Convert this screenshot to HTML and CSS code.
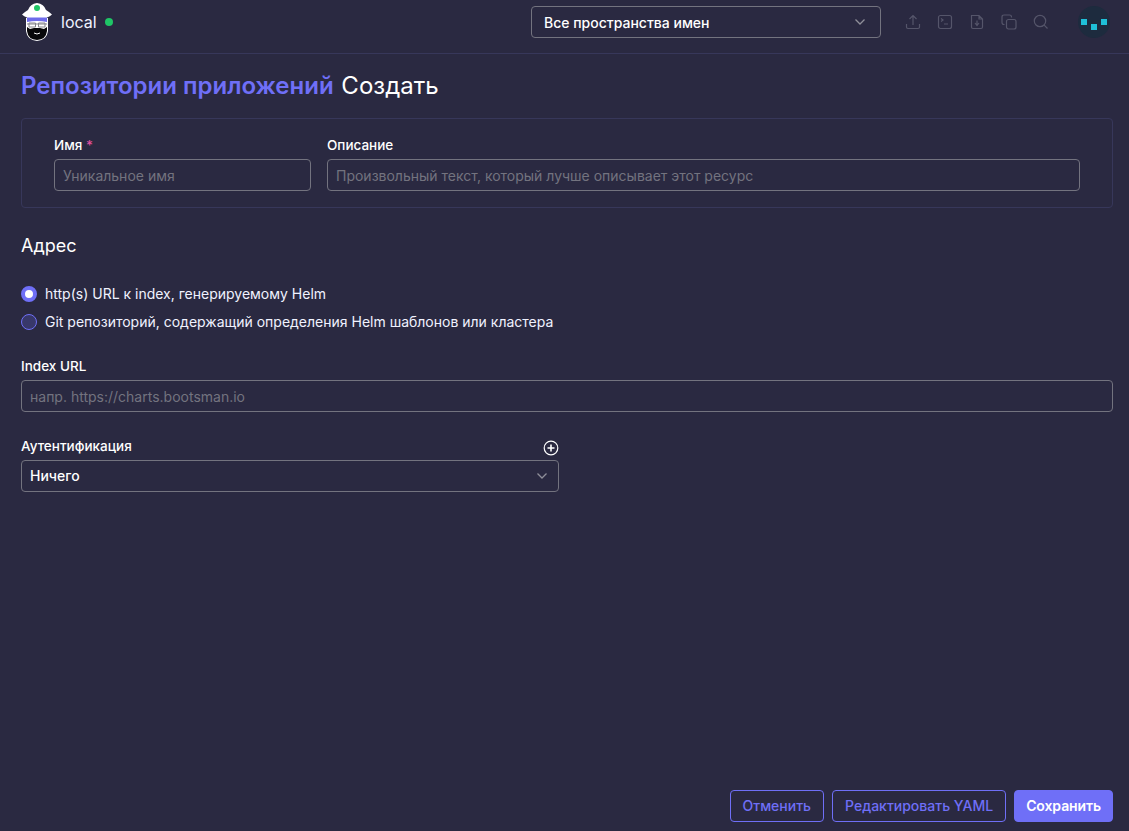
FILE: index.html
```html
<!DOCTYPE html>
<html lang="ru">
<head>
    <meta charset="UTF-8">
    <meta name="viewport" content="width=device-width, initial-scale=1.0">
    <title>Репозитории приложений: Создать</title>
    <link rel="stylesheet" href="styles.css">
</head>
<body>
    <header class="topbar">
        <div class="cluster">
            <svg class="logo" width="32" height="38" viewBox="0 0 32 38">
                <!-- face and beard -->
                <path d="M5 15 V28 Q6 37 16 38 Q26 37 27 28 V15 Z" fill="#fff"/>
                <path d="M6 24 L9 26 L13 25 H19 L23 26 L26 24 V28 Q25 36.5 16 37 Q7 36.5 6 28 Z" fill="#08080a"/>
                <path d="M13 30 Q16 32 19 30" stroke="#fff" stroke-width="1" fill="none"/>
                <!-- glasses -->
                <path d="M6 21 H26 M8 20 h6.5 v4 h-6.5 z M17.5 20 h6.5 v4 h-6.5 z" stroke="#85858c" stroke-width="1" fill="none"/>
                <!-- cap -->
                <path d="M6 14 H26 V19 Q16 17 6 19 Z" fill="#6e6bea"/>
                <path d="M1 11.5 Q4 8.5 7 7 Q9 1 16 0 Q23 1 25 7 Q28 8.5 31 11.5 Q29 13.5 26 14.5 H6 Q3 13.5 1 11.5 Z" fill="#fff"/>
                <circle cx="16" cy="5" r="3" fill="#1fc566"/>
            </svg>
            <span class="cluster-name">local</span>
            <span class="status-dot"></span>
        </div>
        <div class="ns-select">
            <span>Все пространства имен</span>
            <svg class="chevron" width="12" height="8" viewBox="0 0 12 8"><path d="M1.5 1.5 L6 6 L10.5 1.5" fill="none" stroke="#8f8f99" stroke-width="1.3"/></svg>
        </div>
        <div class="actions">
            <svg width="16" height="16" viewBox="0 0 16 16"><path d="M8 11 V2 M4.5 5 L8 1.5 L11.5 5 M1.5 10 V13 Q1.5 14.5 3 14.5 H13 Q14.5 14.5 14.5 13 V10" /></svg>
            <svg width="16" height="16" viewBox="0 0 16 16"><rect x="1.5" y="1.5" width="13" height="13" rx="2"/><path d="M4 4.5 L6 6 L4 7.5 M7 10 H11"/></svg>
            <svg width="16" height="16" viewBox="0 0 16 16"><path d="M2.5 1.5 H10 L13.5 5 V13 Q13.5 14.5 12 14.5 H4 Q2.5 14.5 2.5 13 Z M10 1.5 V5 H13.5 M8 6.5 V11 M6 9 L8 11.5 L10 9"/></svg>
            <svg width="16" height="16" viewBox="0 0 16 16"><rect x="5.5" y="5.5" width="9.5" height="9.5" rx="2"/><path d="M3.5 10.5 H3 Q1 10.5 1 8.5 V3 Q1 1 3 1 H8.5 Q10.5 1 10.5 3 V3.5"/></svg>
            <svg width="16" height="16" viewBox="0 0 16 16"><circle cx="7" cy="7" r="5.7"/><path d="M11.2 11.2 L14.5 14.5"/></svg>
        </div>
        <div class="avatar">
            <svg width="32" height="32" viewBox="0 0 32 32">
                <circle cx="16" cy="16" r="16" fill="#1d2b3e"/>
                <rect x="3" y="13" width="6" height="6" fill="#1fc0d8"/>
                <rect x="13" y="18" width="6" height="6" fill="#1fc0d8"/>
                <rect x="23" y="13" width="6" height="6" fill="#1fc0d8"/>
            </svg>
        </div>
    </header>

    <main class="content">
        <h1 class="title"><a class="title-link">Репозитории приложений</a> <span>Создать</span></h1>

        <section class="name-box">
            <div class="field field-name">
                <label>Имя <span class="required">*</span></label>
                <div class="input placeholder">Уникальное имя</div>
            </div>
            <div class="field field-desc">
                <label>Описание</label>
                <div class="input placeholder">Произвольный текст, который лучше описывает этот ресурс</div>
            </div>
        </section>

        <h3 class="section-title">Адрес</h3>

        <div class="radios">
            <div class="radio-row">
                <span class="radio checked"></span>
                <span>http(s) URL к index, генерируемому Helm</span>
            </div>
            <div class="radio-row">
                <span class="radio"></span>
                <span>Git репозиторий, содержащий определения Helm шаблонов или кластера</span>
            </div>
        </div>

        <div class="field field-url">
            <label>Index URL</label>
            <div class="input placeholder">напр. https://charts.bootsman.io</div>
        </div>

        <div class="field field-auth">
            <div class="auth-head">
                <label>Аутентификация</label>
                <svg width="16" height="16" viewBox="0 0 16 16"><circle cx="8" cy="8" r="6.8" fill="none" stroke="#fff" stroke-width="1.2"/><path d="M8 4.5 V11.5 M4.5 8 H11.5" stroke="#fff" stroke-width="1.6"/></svg>
            </div>
            <div class="input select">
                <span>Ничего</span>
                <svg class="chevron" width="12" height="8" viewBox="0 0 12 8"><path d="M1.5 1.5 L6 6 L10.5 1.5" fill="none" stroke="#8f8f99" stroke-width="1.3"/></svg>
            </div>
        </div>
    </main>

    <footer class="bottom-bar">
        <button class="button outline">Отменить</button>
        <button class="button outline">Редактировать YAML</button>
        <button class="button primary">Сохранить</button>
    </footer>
</body>
</html>
```

FILE: styles.css
```css
html, body {
    height: 100%;
}
body {
    font-family: 'Inter', 'Noto Sans', sans-serif;
    background-color: #2a2941;
    color: #fff;
    margin: 0;
    padding: 0;
    display: flex;
    flex-direction: column;
    font-size: 14px;
    overflow: hidden;
}
.topbar {
    height: 54px;
    flex-shrink: 0;
    box-sizing: border-box;
    border-bottom: 1px solid #37375a;
    display: flex;
    align-items: center;
}
.cluster {
    display: flex;
    align-items: center;
    margin-left: 21px;
    width: 510px;
    margin-top: -9px;
}
.cluster-name {
    font-size: 16px;
    margin-left: 8px;
    color: #f0f2ff;
}
.status-dot {
    width: 8px;
    height: 8px;
    border-radius: 50%;
    background-color: #1fc566;
    margin-left: 8px;
}
.ns-select {
    width: 350px;
    height: 32px;
    box-sizing: border-box;
    border: 1px solid #73737f;
    border-radius: 4px;
    padding: 0 14px 0 12px;
    display: flex;
    align-items: center;
    justify-content: space-between;
    font-weight: 500;
    margin-top: -9px;
}
.actions {
    display: flex;
    gap: 16px;
    margin-left: 24px;
    margin-top: -9px;
}
.actions svg {
    fill: none;
    stroke: #55556a;
    stroke-width: 1.2;
}
.avatar {
    margin-left: 29px;
    height: 32px;
    margin-top: -9px;
}
.content {
    flex: 1;
    padding: 0 16px 0 21px;
}
.title {
    margin: 17px 0 18px;
    font-size: 24px;
    line-height: 29px;
    font-weight: 400;
}
.title-link {
    color: #6f6ff7;
    font-weight: 600;
    margin-right: 1px;
}
.name-box {
    height: 90px;
    box-sizing: border-box;
    border: 1px solid #37375a;
    border-radius: 4px;
    padding: 17px 32px 0 32px;
    display: flex;
    gap: 16px;
}
.field label {
    display: block;
    font-size: 13.5px;
    font-weight: 500;
    line-height: 17px;
    padding-top: 1px;
    margin-bottom: 5px;
}
.field-name {
    width: 257px;
}
.field-desc {
    flex: 1;
}
.required {
    color: #e2509f;
}
.input {
    height: 32px;
    box-sizing: border-box;
    border: 1px solid #73737f;
    border-radius: 4px;
    padding: 0 8px;
    display: flex;
    align-items: center;
}
.placeholder {
    color: #73737f;
}
.section-title {
    margin: 27px 0 0;
    font-size: 18px;
    line-height: 22px;
    font-weight: 400;
}
.radios {
    margin-top: 27px;
    display: flex;
    flex-direction: column;
    gap: 8px;
}
.radio-row {
    display: flex;
    align-items: center;
    gap: 8px;
    line-height: 20px;
    color: #f0f2ff;
}
.radio {
    width: 16px;
    height: 16px;
    box-sizing: border-box;
    border-radius: 50%;
    border: 1px solid #6f6ff7;
    background-color: #38386a;
}
.radio.checked {
    border: 4px solid #6f6ff7;
    background-color: #fff;
}
.field-url {
    margin-top: 25px;
}
.field-auth {
    margin-top: 26px;
    width: 538px;
}
.auth-head {
    display: flex;
    justify-content: space-between;
    align-items: center;
    height: 16px;
    margin-bottom: 6px;
}
.auth-head label {
    margin: 0;
    padding: 0;
}
.auth-head svg {
    margin-top: 4px;
}
.select {
    justify-content: space-between;
    font-weight: 500;
    padding-right: 10px;
    padding-bottom: 1px;
}
.bottom-bar {
    flex-shrink: 0;
    display: flex;
    justify-content: flex-end;
    gap: 8px;
    padding: 0 16px 9px 0;
}
.button {
    height: 32px;
    box-sizing: border-box;
    border-radius: 4px;
    font-family: inherit;
    font-size: 14px;
    font-weight: 500;
    padding: 0 12px 2px;
    border: 1px solid #6f6ff7;
    cursor: pointer;
}
.outline {
    background-color: transparent;
    color: #6f6ff7;
}
.primary {
    background-color: #6f6ff7;
    color: #fff;
    font-weight: 600;
    padding: 0 11px 2px;
    letter-spacing: -0.1px;
}
```
